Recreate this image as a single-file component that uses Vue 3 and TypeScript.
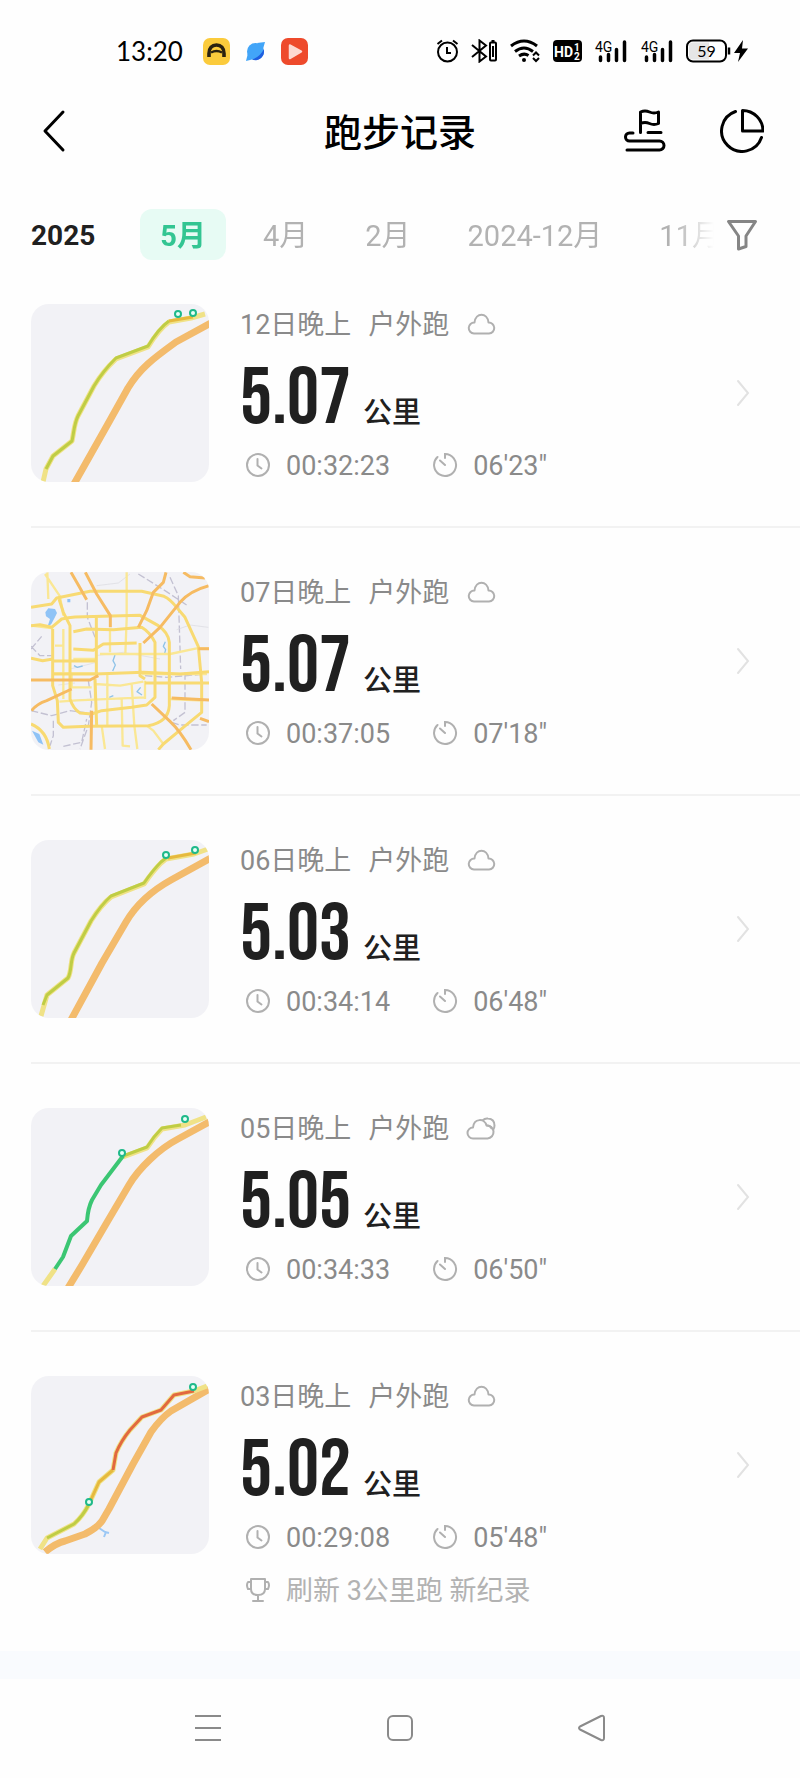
<script setup lang="ts">
import { ref } from 'vue'

interface Stroke {
  d: string
  kind: string
}
interface RunRecord {
  id: number
  date: string
  sport: string
  weather: 'cloud' | 'clouds'
  distance: string
  duration: string
  pace: string
  viewBox: string
  strokes: Stroke[]
  markers: [number, number][]
  achievement?: string
}

const months = ['5月', '4月', '2月', '2024-12月', '11月']
const activeMonth = ref('5月')

const box = '0 0 178 178'

const runs: RunRecord[] = [
  {
    id: 1, date: '12日晚上', sport: '户外跑', weather: 'cloud', distance: '5.07', duration: '00:32:23', pace: '06\'23"',
    viewBox: box,
    strokes: [
      { kind: 'highway', d: 'M43 180L78 118L97 84C109 64 123 54 145 38L180 19' },
      { kind: 'casing', d: 'M12 178L15 165L22 152L41 137C43 128 43 120 47 112L63 82Q72 67 85 55L117 43Q128 25 138 18L160 14L174 10' },
      { kind: 'lime', d: 'M15 165L22 152L41 137C43 128 43 120 47 112L63 82Q72 67 85 54L117 42Q128 24 138 17' },
      { kind: 'amber', d: 'M138 17L162 13' },
    ],
    markers: [[147, 10], [162, 9]],
  },
  {
    id: 2, date: '07日晚上', sport: '户外跑', weather: 'cloud', distance: '5.07', duration: '00:37:05', pace: '07\'18"',
    viewBox: '33 39 534 534',
    strokes: [
      { kind: 'rail', d: 'M355 45L435 95L500 138M450 55L475 110L482 330M202 130V175L225 235M33 270L65 232M33 262L60 290H95M33 455L95 470L150 455L200 462M100 485V530L90 560M130 562L185 550L200 480M455 490L480 498H560M495 340V460L460 485M375 350L440 355L560 345M205 365L215 430L205 500L180 570' },
      { kind: 'thin', d: 'M230 80L295 72L330 45M470 212L510 198L565 205M225 290L310 280L420 300M150 330L230 310M115 378L165 372M165 425L215 420' },
      { kind: 'water', d: 'M76 160L85 148L105 150L111 162L102 180L94 195L82 205L90 180L78 172ZM36 515L58 525L70 557L55 550ZM142 120H151V130H142Z' },
      { kind: 'stream', d: 'M285 288L279 305L286 318L278 336M162 320L172 325L188 321M436 248L430 262L437 272L433 286M362 385L351 398L366 408M268 415L280 410' },
      { kind: 'lane', d: 'M320 40V180L316 285M82 40L85 120M75 45L120 112L130 170M105 260H130M130 210V420M270 215V280M155 345V385H215M33 200L100 208M262 345V500M335 375L343 500L352 570M305 420L308 560L330 562M118 428L170 424L375 415M100 343H225M225 375L300 380L370 368M240 285H450L530 268H567M365 345H560M160 300H230M225 360V420M380 500L400 515L430 555M245 500L255 570M448 420L550 425M375 365V420' },
      { kind: 'road', d: 'M33 145L95 135L110 117L210 97H365L432 112Q450 120 470 145L495 175L535 263L545 370V460L500 497L430 555L415 572' },
      { kind: 'road', d: 'M33 298L68 305L98 300M33 200L60 197L95 205L125 180Q145 175 165 174L360 169L415 200Q445 220 448 250V440Q445 490 385 500L205 502L130 505L115 490L112 425L98 380V210' },
      { kind: 'road', d: 'M117 120L130 160L150 200V420Q160 450 180 462L215 465L245 455L335 445L380 438L405 415V250Q390 220 365 205L280 212L200 210L160 218' },
      { kind: 'road', d: 'M229 175V355M160 270L220 274L250 255L350 252M360 252V350L375 360M98 306H225M100 345H225L370 340L480 345L567 338M375 372H567M225 360L230 500M33 495Q80 515 88 570' },
      { kind: 'arterial', d: 'M33 363H210L235 350M153 40L175 78L200 122M196 40L230 105L271 170V205M438 40L430 70L400 100L380 155L355 205M490 40L510 53L555 57M370 252L420 205L480 130Q510 95 567 80M35 455Q50 435 80 425L155 390M215 455L213 572M395 435L450 487Q480 515 513 572M455 417L567 423M535 269H567M540 478L567 488' },
    ],
    markers: [],
  },
  {
    id: 3, date: '06日晚上', sport: '户外跑', weather: 'cloud', distance: '5.03', duration: '00:34:14', pace: '06\'48"',
    viewBox: box,
    strokes: [
      { kind: 'highway', d: 'M40 180L71 123L95 82C105 65 122 50 140 40L180 18' },
      { kind: 'casing', d: 'M10 176L16 155L37 138C41 131 39 121 43 113L60 81Q70 65 80 57L113 44Q122 31 130 23L135 19L163 14L177 9' },
      { kind: 'lime', d: 'M12 165L16 155L37 138C41 131 39 121 43 113L60 81Q70 65 80 56L113 43Q122 30 130 22L135 18' },
      { kind: 'amber', d: 'M137 18L165 13' },
    ],
    markers: [[135, 15], [164, 10]],
  },
  {
    id: 4, date: '05日晚上', sport: '户外跑', weather: 'clouds', distance: '5.05', duration: '00:34:33', pace: '06\'50"',
    viewBox: box,
    strokes: [
      { kind: 'highway', d: 'M37 180L51 157L75 116L98 77C108 60 128 41 147 31L180 13' },
      { kind: 'casing', d: 'M12 178L24 161M92 49L116 40Q123 29 131 21L154 17L175 9' },
      { kind: 'lime', d: 'M92 48L116 39Q123 28 131 20L150 17' },
      { kind: 'green', d: 'M24 161L32 149L40 128L56 113Q57 100 61 92L70 77L92 48' },
    ],
    markers: [[91, 45], [154, 11]],
  },
  {
    id: 5, date: '03日晚上', sport: '户外跑', weather: 'cloud', distance: '5.02', duration: '00:29:08', pace: '05\'48"',
    viewBox: box,
    achievement: '刷新 3公里跑 新纪录',
    strokes: [
      { kind: 'creek', d: 'M68 152L74 156L78 157M73 161L75 156' },
      { kind: 'highway', d: 'M14 176Q25 167 34 165L54 158Q66 152 71 145L78 133L102 88L120 56Q130 42 140 35L180 12' },
      { kind: 'casing', d: 'M9 173L16 162L43 148Q52 140 58 128L68 106L82 94L85 77Q90 65 99 54L111 41L130 34L143 19L163 15L176 10' },
      { kind: 'lime', d: 'M16 162L43 148Q52 140 58 128' },
      { kind: 'amber', d: 'M58 128L68 106L82 94' },
      { kind: 'red', d: 'M82 94L85 77Q90 65 99 54L111 41L130 34L143 19L163 15' },
    ],
    markers: [[58, 126], [162, 11]],
  },
]
</script>

<template>
  <div class="page">
    <div class="status">
      <div class="status-left">
        <span class="clock">13:20</span>
        <svg class="app-icon" viewBox="0 0 27 27" aria-hidden="true">
          <rect width="27" height="27" rx="7" fill="#fbcb3c" />
          <path d="M6 19V15.500C6 10 9 7 13.500 7S21 10 21 15.500V19" fill="none" stroke="#2a2110" stroke-width="3.600" />
          <path d="M8 14.500Q13.500 11.500 19 14.500" fill="none" stroke="#2a2110" stroke-width="2.400" />
        </svg>
        <svg class="app-icon" viewBox="0 0 27 27" aria-hidden="true">
          <circle cx="13.500" cy="13.500" r="8.500" fill="#42a5f8" />
          <path d="M15 5L23 4L21 11ZM6 15L4 23L12 21Z" fill="#42a5f8" />
          <path d="M22 13.500A8.500 8.500 0 0 1 10 21.400Q18 19 22 11Z" fill="#1f5fe0" />
        </svg>
        <svg class="app-icon" viewBox="0 0 27 27" aria-hidden="true">
          <rect width="27" height="27" rx="7" fill="#ee4a2c" />
          <path d="M9 7.500L20 13.500L9 20Z" fill="#fdd9d2" stroke="#fdd9d2" stroke-width="2.500" stroke-linejoin="round" />
        </svg>
      </div>
      <div class="status-right">
        <svg width="23" height="24" viewBox="0 0 23 24" fill="none" stroke="#000" stroke-width="2" aria-hidden="true">
          <circle cx="11.500" cy="13" r="9.500" />
          <path d="M11 8V14H15M1.500 5L6 1.500M21.500 5L17 1.500" />
        </svg>
        <svg width="27" height="24" viewBox="0 0 27 24" fill="none" stroke="#000" stroke-width="2" aria-hidden="true">
          <path d="M1 6L15 17.500L8.500 22.500V1.500L15 6.500L1 18" />
          <rect x="19" y="3.500" width="6" height="18" rx="1" />
          <path d="M20.500 2H23.500M22 7V18" />
        </svg>
        <svg width="31" height="24" viewBox="0 0 31 24" fill="none" stroke="#000" stroke-width="3" aria-hidden="true">
          <path d="M1 7Q14 -3 27 7M5 12.500Q14 5.500 23 12.500M9 17Q14 13.500 18.500 16.500" />
          <circle cx="14" cy="21" r="2" fill="#000" stroke="none" />
          <path d="M23 16.500L26 13.500L29 16.500M23 19L26 22L29 19" stroke-width="2" />
        </svg>
        <svg width="29" height="24" viewBox="0 0 29 24" aria-hidden="true">
          <rect y="1" width="29" height="22" rx="4" />
          <text x="1" y="17.500" class="hd">HD</text>
          <text x="21" y="11.500" class="hd-small">1</text>
          <text x="21" y="21" class="hd-small">2</text>
        </svg>
        <svg v-for="n in 2" :key="n" width="34" height="24" viewBox="0 0 34 24" aria-hidden="true">
          <text x="1" y="13" class="net">4G</text>
          <path d="M6.500 18V21.500M14.500 15.500V21.500M22.500 10.500V21.500M30.500 3V21.500" fill="none" stroke="#000" stroke-width="3.500" stroke-linecap="round" />
        </svg>
        <svg width="64" height="24" viewBox="0 0 64 24" aria-hidden="true">
          <rect x="1" y="1.500" width="39" height="21" rx="6" fill="#fff" stroke="#000" stroke-width="2" />
          <path d="M7 3.500H23V20.500H7Q3 20.500 3 17V7Q3 3.500 7 3.500Z" fill="#e6e6e6" />
          <path d="M43 8.500V15.500" stroke="#000" stroke-width="2.500" />
          <text x="20.500" y="17.500" text-anchor="middle" class="level">59</text>
          <path d="M57 1L48 14H54L52 23L62 9.500H56Z" />
        </svg>
      </div>
    </div>

    <header class="header">
      <button class="icon-btn back" type="button" aria-label="返回">
        <svg width="24" height="44" viewBox="0 0 24 44" fill="none" stroke="#000" stroke-width="3" stroke-linecap="round" stroke-linejoin="round">
          <path d="M21 3L3 22L21 41" />
        </svg>
      </button>
      <h1>跑步记录</h1>
      <div class="actions">
        <button class="icon-btn" type="button" aria-label="路线">
          <svg width="44" height="44" viewBox="0 0 44 44" fill="none" stroke="#000" stroke-width="3" stroke-linecap="round" stroke-linejoin="round">
            <path d="M18.500 23.500V3Q23 1 27.500 3T36.500 3V14.500Q32 16.500 27.500 14.500T18.500 14.500M26 23.500H39M11 24H7.500A4 4 0 0 0 7.500 32H37.500A4.500 4.500 0 0 1 37.500 41H5" />
          </svg>
        </button>
        <button class="icon-btn" type="button" aria-label="统计">
          <svg width="44" height="44" viewBox="0 0 44 44" fill="none" stroke="#000" stroke-width="3" stroke-linecap="round" stroke-linejoin="round">
            <path d="M15.500 2.500A20.500 20.500 0 1 0 41.500 28.500" />
            <path d="M22.500 1.500V22H43A20.500 20.500 0 0 0 22.500 1.500Z" />
          </svg>
        </button>
      </div>
    </header>

    <nav class="months" aria-label="月份">
      <span class="year">2025</span>
      <div class="tabs">
        <button
          v-for="month in months"
          :key="month"
          type="button"
          class="tab"
          :class="{ active: month === activeMonth }"
          @click="activeMonth = month"
        >{{ month }}</button>
      </div>
      <button class="icon-btn" type="button" aria-label="筛选">
        <svg width="32" height="32" viewBox="0 0 32 32" fill="none" stroke="#858585" stroke-width="3" stroke-linejoin="round">
          <path d="M2.500 2.500H29.500L20 17V27.500L12.500 30V17Z" />
        </svg>
      </button>
    </nav>

    <main>
      <ul class="list">
        <li v-for="run in runs" :key="run.id">
          <a class="run" href="#">
            <svg class="map" :viewBox="run.viewBox" aria-hidden="true">
              <path v-for="(s, i) in run.strokes" :key="i" :class="s.kind" :d="s.d" />
              <circle v-for="(m, i) in run.markers" :key="'m' + i" class="marker" :cx="m[0]" :cy="m[1]" r="3" />
            </svg>
            <div class="body">
              <div class="title">
                <span>{{ run.date }}</span>
                <span>{{ run.sport }}</span>
                <svg width="30" height="24" viewBox="0 0 30 24" fill="none" stroke="#b0b0b0" stroke-width="2" stroke-linejoin="round" aria-hidden="true">
                  <path v-if="run.weather === 'cloud'" d="M8 20.500A5.500 5.500 0 0 1 8.500 9.500C9.500 -1 21.500 -1 22.500 9.500A5.500 5.500 0 0 1 23 20.500Z" />
                  <template v-else>
                    <path d="M7 21.500A5.500 5.500 0 0 1 7 10.500C8 1 18.500 1 20.500 8.500A6.500 6.500 0 0 1 21.500 21.500Z" />
                    <path d="M16.500 3.500Q19 1 22 1.500Q28.500 2 28.500 8.500Q28.500 11 27 13M20.500 8.500Q24 8 26 12" />
                  </template>
                </svg>
              </div>
              <div class="distance">
                <strong>{{ run.distance }}</strong>
                <span>公里</span>
              </div>
              <div class="stats">
                <span class="stat">
                  <svg width="26" height="26" viewBox="0 0 26 26" fill="none" stroke="#b0b0b0" stroke-width="2" stroke-linecap="round" aria-hidden="true">
                    <circle cx="13" cy="12" r="11" />
                    <path d="M12.500 6V12.500L16.500 15.500" />
                  </svg>
                  {{ run.duration }}
                </span>
                <span class="stat">
                  <svg width="26" height="26" viewBox="0 0 26 26" fill="none" stroke="#b0b0b0" stroke-width="2" stroke-linecap="round" aria-hidden="true">
                    <path d="M13 5V1A11 11 0 1 1 5.500 4M8 7.500L13 12" />
                  </svg>
                  {{ run.pace }}
                </span>
              </div>
              <div v-if="run.achievement" class="achievement">
                <svg width="26" height="26" viewBox="0 0 26 26" fill="none" stroke="#b0b0b0" stroke-width="2" stroke-linecap="round" stroke-linejoin="round" aria-hidden="true">
                  <path d="M6 1H20V11Q20 17 13 17T6 11ZM6 4H3Q1 7 3 11H6M20 4H23Q25 7 23 11H20M13 17V23M8 23H18" />
                </svg>
                {{ run.achievement }}
              </div>
            </div>
            <svg class="chevron" width="14" height="28" viewBox="0 0 14 28" fill="none" stroke="#e2e2e2" stroke-width="2" stroke-linecap="round" aria-hidden="true">
              <path d="M2 2L12 14L2 26" />
            </svg>
          </a>
        </li>
      </ul>
    </main>

    <div class="band"></div>

    <nav class="system-nav" aria-label="系统导航">
      <button class="icon-btn" type="button" aria-label="最近任务">
        <svg width="28" height="28" viewBox="0 0 28 28" fill="none" stroke="#8a8a8a" stroke-width="2">
          <path d="M1 2H27M1 14H27M1 26H27" />
        </svg>
      </button>
      <button class="icon-btn" type="button" aria-label="主页">
        <svg width="28" height="28" viewBox="0 0 28 28" fill="none" stroke="#8a8a8a" stroke-width="2">
          <rect x="2" y="2" width="24" height="24" rx="5" />
        </svg>
      </button>
      <button class="icon-btn" type="button" aria-label="后退">
        <svg width="28" height="28" viewBox="0 0 28 28" fill="none" stroke="#8a8a8a" stroke-width="2" stroke-linejoin="round">
          <path d="M2 12.500L23 2Q26 1 26 4V24Q26 27 23 26L2 15.500Q0 14 2 12.500Z" />
        </svg>
      </button>
    </nav>
  </div>
</template>

<style>
body {
  margin: 0;
  background: #fefefe;
}
</style>

<style scoped>
.page {
  font-family: Roboto, 'Noto Sans CJK SC', sans-serif;
  color: #202020;
}
.page svg {
  display: block;
  flex: none;
}
button {
  font: inherit;
  border: 0;
  background: none;
  padding: 0;
}
.icon-btn {
  display: flex;
}
.status {
  height: 102px;
  padding: 0 50px 0 116px;
  box-sizing: border-box;
  display: flex;
  align-items: center;
  justify-content: space-between;
}
.status-left {
  display: flex;
  align-items: center;
  gap: 12px;
}
.clock {
  font: 26px/32px Lato, sans-serif;
  color: #000;
  margin-right: 8px;
}
.app-icon {
  width: 27px;
  height: 27px;
}
.status-right {
  display: flex;
  align-items: center;
  gap: 12px;
}
.hd {
  font: bold 14px Roboto, sans-serif;
  fill: #fff;
}
.hd-small {
  font: bold 10px Roboto, sans-serif;
  fill: #fff;
}
.net {
  font: 14px Roboto, sans-serif;
}
.level {
  font: 16px Lato, sans-serif;
}
.header {
  height: 58px;
  padding: 0 36px;
  display: grid;
  grid-template-columns: 1fr auto 1fr;
  align-items: center;
}
.back {
  padding-left: 6px;
}
h1 {
  margin: 0;
  padding-top: 4px;
  font-size: 38px;
  line-height: 52px;
  font-weight: 500;
  color: #000;
}
.actions {
  display: flex;
  justify-content: flex-end;
  gap: 54px;
}
.months {
  margin-top: 49px;
  padding: 0 42px 0 31px;
  height: 51px;
  display: flex;
  align-items: center;
}
.year {
  padding-top: 3px;
  font-size: 28px;
  line-height: 48px;
  font-weight: 700;
  margin-right: 45px;
}
.tabs {
  flex: 1;
  min-width: 0;
  margin-right: 12px;
  display: flex;
  gap: 17px;
  overflow: hidden;
  mask-image: linear-gradient(to right, #000 93%, transparent);
}
.tab {
  flex: none;
  padding: 3px 20px 0;
  font-size: 29px;
  line-height: 48px;
  border-radius: 12px;
  color: #b2b2b2;
}
.tab.active {
  background: #e7fbf4;
  color: #33c592;
  font-weight: 700;
}
.list {
  list-style: none;
  margin: 0;
  padding: 0 0 0 31px;
}
.run {
  display: flex;
  align-items: flex-start;
  padding: 44px 50px 44px 0;
  color: inherit;
  text-decoration: none;
}
li + li {
  border-top: 2px solid #f2f2f2;
}
.map {
  width: 178px;
  height: 178px;
  border-radius: 18px;
  background: #f2f2f6;
}
.map path {
  fill: none;
  stroke-linejoin: round;
}
.map .highway {
  stroke: #f3bb6c;
  stroke-width: 7;
}
.map .casing {
  stroke: #f0e287;
  stroke-width: 5;
}
.map .lime {
  stroke: #bfcd45;
  stroke-width: 3;
}
.map .amber {
  stroke: #e6b93e;
  stroke-width: 3;
}
.map .green {
  stroke: #3bc673;
  stroke-width: 4;
}
.map .red {
  stroke: #e2693f;
  stroke-width: 3;
}
.map .creek {
  stroke: #9cc8f5;
  stroke-width: 2;
}
.map .rail {
  stroke: #c3c1d2;
  stroke-width: 4;
  stroke-dasharray: 22 8;
}
.map .thin {
  stroke: #d9dadf;
  stroke-width: 2;
}
.map .water {
  fill: #8fc3f6;
}
.map .stream {
  stroke: #8fc3e8;
  stroke-width: 4;
}
.map .lane {
  stroke: #fae794;
  stroke-width: 7;
}
.map .road {
  stroke: #f8da72;
  stroke-width: 9;
}
.map .arterial {
  stroke: #f6bb62;
  stroke-width: 9;
}
.map .marker {
  fill: #e8fff7;
  stroke: #1fb98a;
  stroke-width: 2;
}
.body {
  flex: 1;
  padding: 5px 0 0 31px;
  color: #8a8a8a;
  font-size: 27px;
  line-height: 32px;
}
.title {
  display: flex;
  align-items: center;
  gap: 17px;
}
.distance {
  height: 109px;
  display: flex;
  align-items: baseline;
  gap: 12px;
  color: #202020;
}
.distance strong {
  font: 80px/116px 'Bebas Neue', Oswald, 'Roboto Condensed', 'Liberation Sans Narrow', Roboto, sans-serif;
}
.distance span {
  font-size: 29px;
  font-weight: 500;
}
.stats {
  display: flex;
  gap: 42px;
}
.stat,
.achievement {
  display: flex;
  align-items: center;
  gap: 15px;
  margin-left: 5px;
}
.stat + .stat {
  margin-left: 0;
}
.achievement {
  margin-top: 21px;
  color: #b2b2b2;
}
.chevron {
  margin-top: 75px;
}
.band {
  height: 28px;
  background: #f9fbfe;
}
.system-nav {
  height: 98px;
  padding: 0 14%;
  display: grid;
  grid-template-columns: repeat(3, 1fr);
  align-items: center;
  justify-items: center;
}
</style>
